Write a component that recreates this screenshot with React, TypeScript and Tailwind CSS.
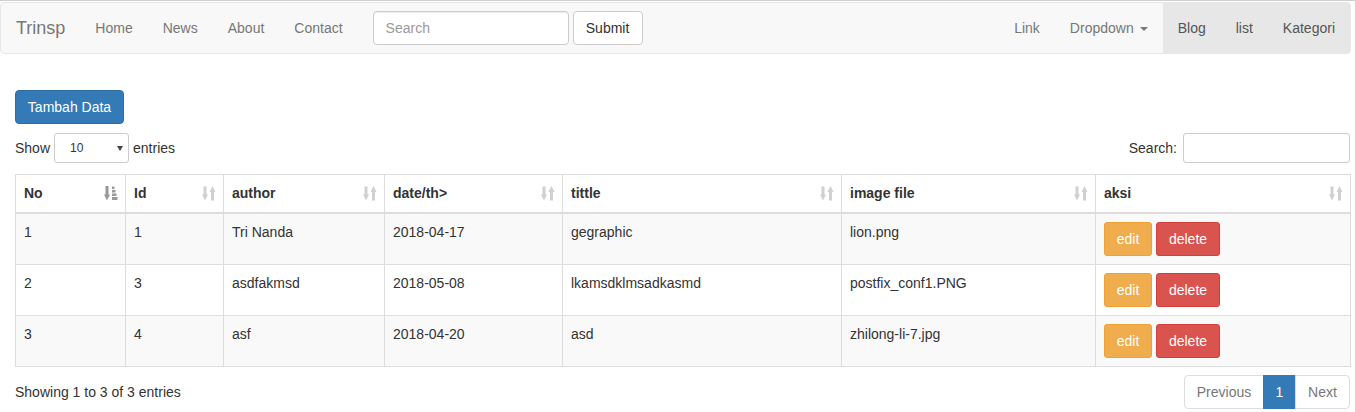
import React from "react";

const font = { fontFamily: '"Liberation Sans", Arial, Helvetica, sans-serif' };

function SortIcon({ active }: { active?: boolean }) {
  const fill = active ? "#999999" : "#d0d0d0";
  if (active) {
    return (
      <svg width="14" height="15" viewBox="0 0 14 15" className="absolute right-[7px] top-[11px]">
        <rect x="1.5" y="0" width="3" height="9.5" fill={fill} />
        <polygon points="0,8.5 6,8.5 3,14.5" fill={fill} />
        <rect x="8" y="0.5" width="2.5" height="2.5" fill={fill} />
        <rect x="8" y="4" width="3.5" height="2.5" fill={fill} />
        <rect x="8" y="7.5" width="4.5" height="2.5" fill={fill} />
        <rect x="8" y="11" width="5.5" height="3" fill={fill} />
      </svg>
    );
  }
  return (
    <svg width="14" height="15" viewBox="0 0 14 15" className="absolute right-[7px] top-[11px]">
      <rect x="1.5" y="0.5" width="3" height="9" fill={fill} />
      <polygon points="0,8.5 6,8.5 3,14.5" fill={fill} />
      <polygon points="7.5,6 13.5,6 10.5,0" fill={fill} />
      <rect x="9" y="5.5" width="3" height="9" fill={fill} />
    </svg>
  );
}

const cols = [
  { label: "No", w: 110, active: true },
  { label: "Id", w: 98 },
  { label: "author", w: 161 },
  { label: "date/th>", w: 178 },
  { label: "tittle", w: 279 },
  { label: "image file", w: 254 },
  { label: "aksi", w: 255 },
];

const rows = [
  ["1", "1", "Tri Nanda", "2018-04-17", "gegraphic", "lion.png"],
  ["2", "3", "asdfakmsd", "2018-05-08", "lkamsdklmsadkasmd", "postfix_conf1.PNG"],
  ["3", "4", "asf", "2018-04-20", "asd", "zhilong-li-7.jpg"],
];

export default function App() {
  return (
    <div className="bg-white text-[14px] leading-[20px] text-[#333333]" style={font}>
      <div className="h-[2px] w-full border-t border-[#cfcfcf]" />
      {/* Navbar */}
      <nav className="flex h-[52px] w-[1351px] items-stretch rounded-[4px] border border-[#e7e7e7] bg-[#f8f8f8]">
        <a className="flex items-center px-[15px] text-[18px] text-[#777777]">Trinsp</a>
        <a className="flex items-center px-[15px] text-[#777777]">Home</a>
        <a className="flex items-center px-[15px] text-[#777777]">News</a>
        <a className="flex items-center px-[15px] text-[#777777]">About</a>
        <a className="flex items-center px-[15px] text-[#777777]">Contact</a>
        <div className="flex items-center gap-[4px] px-[15px]">
          <div className="flex h-[34px] w-[196px] items-center rounded-[4px] border border-[#cccccc] bg-white px-[12px] text-[#999999] shadow-[inset_0_1px_1px_rgba(0,0,0,0.075)]">
            Search
          </div>
          <button className="h-[34px] w-[70px] rounded-[4px] border border-[#cccccc] bg-white text-[#333333]">
            Submit
          </button>
        </div>
        <div className="flex-1" />
        <a className="flex items-center px-[15px] text-[#777777]">Link</a>
        <a className="flex items-center px-[15px] text-[#777777]">
          Dropdown
          <span className="ml-[6px] mt-[1px] inline-block h-0 w-0 border-x-[4px] border-t-[4px] border-x-transparent border-t-[#777777]" />
        </a>
        <div className="flex bg-[#e7e7e7]">
          <a className="flex items-center px-[15px] text-[#555555]">Blog</a>
          <a className="flex items-center px-[15px] text-[#555555]">list</a>
          <a className="flex items-center px-[15px] text-[#555555]">Kategori</a>
        </div>
      </nav>

      {/* Content */}
      <div className="w-[1350px] pl-[15px] pt-[36px]">
        <button className="h-[34px] w-[109px] rounded-[4px] border border-[#2e6da4] bg-[#337ab7] text-white">
          Tambah Data
        </button>

        <div className="mt-[9px] flex items-center justify-between">
          <div className="flex items-center">
            <span>Show</span>
            <div className="relative mx-[4px] flex h-[30px] w-[75px] items-center rounded-[3px] border border-[#cccccc] bg-white pl-[15px] text-[12px]">
              10
              <span className="absolute right-[5px] top-[12px] h-0 w-0 border-x-[3.5px] border-t-[5px] border-x-transparent border-t-[#444444]" />
            </div>
            <span>entries</span>
          </div>
          <div className="flex items-center">
            <span>Search:</span>
            <div className="ml-[6px] h-[30px] w-[167px] rounded-[3px] border border-[#cccccc] bg-white" />
          </div>
        </div>

        <table className="mt-[11px] w-[1335px] table-fixed border-collapse border border-[#dddddd]">
          <colgroup>
            {cols.map((c) => (
              <col key={c.label} style={{ width: c.w }} />
            ))}
          </colgroup>
          <thead>
            <tr>
              {cols.map((c) => (
                <th
                  key={c.label}
                  className="relative border border-b-2 border-[#dddddd] pb-[9px] pl-[8px] pr-[30px] pt-[8px] text-left font-bold"
                >
                  {c.label}
                  <SortIcon active={c.active} />
                </th>
              ))}
            </tr>
          </thead>
          <tbody>
            {rows.map((r, i) => (
              <tr key={i} className={i % 2 === 0 ? "bg-[#f9f9f9]" : "bg-white"}>
                {r.map((v, j) => (
                  <td key={j} className="border border-[#dddddd] p-[8px] align-top">
                    {v}
                  </td>
                ))}
                <td className="border border-[#dddddd] p-[8px] align-top">
                  <div className="flex gap-[4px]">
                    <button className="h-[34px] w-[48px] rounded-[3px] border border-[#eea236] bg-[#f0ad4e] text-white">
                      edit
                    </button>
                    <button className="h-[34px] w-[64px] rounded-[3px] border border-[#d43f3a] bg-[#d9534f] text-white">
                      delete
                    </button>
                  </div>
                </td>
              </tr>
            ))}
          </tbody>
        </table>

        <div className="mt-[8px] flex items-center justify-between">
          <div>Showing 1 to 3 of 3 entries</div>
          <div className="flex h-[34px]">
            <span className="flex w-[80px] items-center justify-center rounded-l-[4px] border border-[#dddddd] bg-white text-[#777777]">
              Previous
            </span>
            <span className="-ml-px flex w-[33px] items-center justify-center border border-[#337ab7] bg-[#337ab7] text-white">
              1
            </span>
            <span className="-ml-px flex w-[55px] items-center justify-center rounded-r-[4px] border border-[#dddddd] bg-white text-[#777777]">
              Next
            </span>
          </div>
        </div>
      </div>
    </div>
  );
}
